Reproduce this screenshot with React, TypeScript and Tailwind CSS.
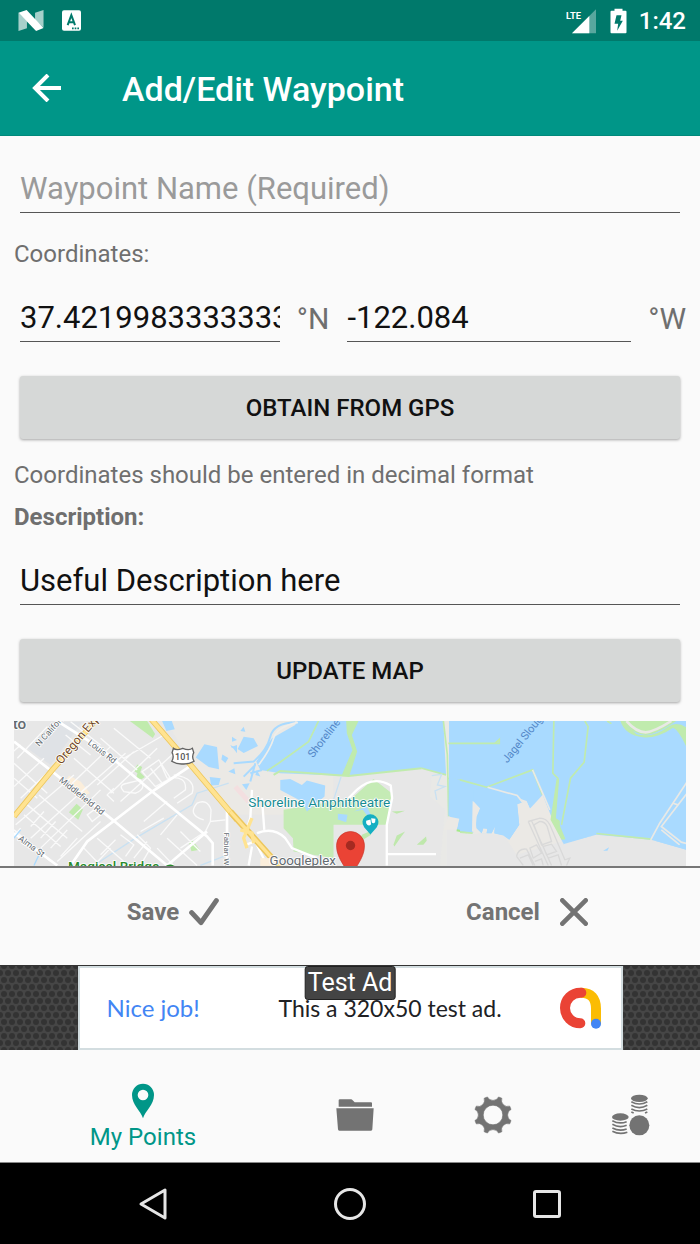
import type { ReactNode } from "react";

const fieldClass =
  "h-[46px] min-w-0 border-b border-[#555] bg-transparent pb-[2px] text-[31px] text-[#111] outline-none placeholder:text-[#9a9a9a]";
const raisedClass =
  "mx-[6px] h-[63px] rounded-[3px] bg-[#d6d8d7] text-2xl font-medium text-[#111] shadow-[0_1px_3px_rgba(0,0,0,0.35)]";

function StatusBar() {
  return (
    <div className="flex h-[41px] shrink-0 items-center bg-[#00796b] pr-[14px] pl-[18px] text-white">
      <svg className="h-[21px] w-[26px]" viewBox="0 0 76 62" aria-hidden="true">
        <path d="M1 8 26 33V54L1 62ZM75 0V52L50 30V8Z" fill="#fff" opacity=".65" />
        <path d="M1 8 25 0 75 53 53 62Z" fill="#fff" />
      </svg>
      <svg className="ml-[18px] h-[21px] w-[19px]" viewBox="0 0 57 62" aria-hidden="true">
        <rect width="57" height="62" rx="6" fill="#fff" />
        <path d="M17 45 28 15 39 45M20 36H36" fill="none" stroke="#00796b" strokeWidth="6" />
        <path d="M30 52h5v5h-5zM38 52h5v5h-5zM46 52h5v5h-5z" fill="#00796b" />
      </svg>
      <div className="flex-1" />
      <svg className="h-[26px] w-[32px]" viewBox="0 0 96 78" aria-label="LTE signal">
        <path d="M90 4V76H18Z" fill="#fff" opacity=".35" />
        <path d="M70 24V76H18Z" fill="#fff" />
        <text x="0" y="32" fontSize="28" fontWeight="700" fill="#fff" className="font-['Roboto',sans-serif]">
          LTE
        </text>
      </svg>
      <svg className="ml-[12px] h-[26px] w-[17px]" viewBox="0 0 50 78" aria-hidden="true">
        <path d="M13 2H37V8H46Q49 8 49 11V73Q49 76 46 76H4Q1 76 1 73V11Q1 8 4 8H13Z" fill="#fff" />
        <path d="M19 22H34L30 38H38L21 68L24 47H13Z" fill="#00796b" />
      </svg>
      <span className="ml-[12px] text-2xl font-medium">1:42</span>
    </div>
  );
}

function MapView() {
  return (
    <svg className="mt-[19px] block w-full shrink-0" viewBox="0 0 2019 900" role="img" aria-label="Map of the waypoint">
      <rect width="2019" height="900" fill="#e7e7e7" />
      <g transform="translate(-40 -18)">
        <path d="M498 18H1000V300L705 300 575 150Z" fill="#ebe9e5" />
        <path d="M80 100 160 20H245L150 150Z" fill="#dfe2e6" />
        <path d="M205 182 240 200 268 235 232 250 190 205Z" fill="#fbeedb" />
        <path d="M388 18H440L464 57 457 69Z" fill="#c0ebad" />
        <path d="M411 149 425 156 419 172 433 186 423 193 407 188 411 175 399 167ZM228 267 247 284 233 315 205 292ZM576 376 598 405 573 409 566 382Z" fill="#c0ebad" />
        <path d="M485 18H514L523 43 498 48ZM586 128 612 88 650 96 656 163 625 156ZM666 119 684 129 675 144 663 134ZM628 186 661 190 655 210 632 212ZM695 95 710 90V115ZM684 170 702 160 705 178Z" fill="#a9daff" />
        <path d="M685 205 590 235 575 270 405 370 280 452M600 452 670 425" fill="none" stroke="#c9e1f2" strokeWidth="4" />
        <g fill="none" stroke="#fafafa" strokeWidth="4">
          <path d="M40 145 140 235M40 190 110 250M60 90 10 135M140 35 50 130M40 215 130 130M60 250 180 135M45 330 220 180M90 370 260 215M120 400 300 225M170 440 300 320M220 130 340 235M215 205 330 95M245 230 375 115M290 210 400 110M330 235 470 100M360 260 520 115M300 70 410 165M340 40 450 130M370 130 490 60M195 60 270 120M210 20 300 90" />
          <path d="M80 270 200 370M70 300 180 395M115 240 245 350M40 345 150 440M60 340 25 380M130 290 90 335M165 320 120 370M200 345 150 400M230 370 180 425M250 400 300 452M290 370 370 440M330 400 280 452M345 375 300 420M360 360 400 390 375 425M410 360 450 400 420 452M440 380 400 430M470 400 520 452M500 370 590 452M540 350 600 410M490 310 420 350M530 300 480 360M500 260 430 320M380 205Q350 210 370 230L405 235Q440 220 420 195L380 205M425 170 475 135 510 190 465 215ZM450 160 485 205M480 145 500 190M500 190Q560 180 555 225L520 250M520 180Q590 190 575 235L530 265M610 315Q560 300 590 265Q620 250 632 285L630 320 675 315M630 320 615 350 540 400M260 300 280 285 300 300 275 320ZM340 220 320 240 340 260" />
        </g>
        <g fill="none" stroke="#fff" strokeWidth="8">
          <path d="M40 80 155 170 340 318 500 452M170 18 300 100 455 230 620 365 637 385V452M575 150 455 230 260 380 210 452M680 285V452M40 355 170 452M500 452 620 350" />
        </g>
        <path d="M40 305 155 165 285 18M450 10 575 155 710 315" fill="none" stroke="#edc75d" strokeWidth="17" />
        <path d="M40 305 155 165 285 18M450 10 575 155 710 315" fill="none" stroke="#ffe391" strokeWidth="12" />
        <path d="M40 370 60 345M100 452 115 420" stroke="#a9daff" strokeWidth="4" />
      </g>

      <g transform="translate(650 -18)">
        <path d="M200 18H705V345L655 302 650 182 575 160 355 183 150 175 90 165 78 140 125 70 195 30Z" fill="#a9daff" />
        <path d="M640 18H657V185L650 305 650 452H630L645 285 600 245 605 180 648 178Z" fill="#e9e9e6" />
        <path d="M110 168 145 145 235 80 265 18M575 160 648 180M640 18 652 120 656 305M655 85H705M656 190 705 200" fill="none" stroke="#c0ebad" strokeWidth="5" />
        <path d="M348 18 350 55 367 105 335 180 357 184 381 110 365 60 385 18Z" fill="#c0ebad" />
        <path d="M575 160 355 183 150 168 130 180" fill="none" stroke="#c0ebad" strokeWidth="6" />
        <path d="M657 185 705 200V350L680 345 688 312 655 302Z" fill="#a9daff" />
        <path d="M655 305 688 312 680 345 640 345Z" fill="#ebe9e5" />
        <path d="M680 346 710 352" stroke="#a5ea8a" strokeWidth="6" />
        <path d="M40 65 70 70 83 93 40 114 22 102ZM40 35 45 50 30 48ZM5 65 20 75 5 80ZM80 165 90 185 75 180ZM35 208 58 205 48 225ZM0 90 10 95 5 100Z" fill="#a9daff" />
        <path d="M195 22Q130 25 120 65T70 140L10 145M75 145 60 200M75 150 40 185M95 165 60 175" fill="none" stroke="#a9daff" strokeWidth="6" />
        <path d="M203 22Q140 35 130 70T85 150" fill="none" stroke="#eeeeeb" strokeWidth="5" />
        <path d="M160 285 365 250 430 192 485 235 470 330H310V430L190 410 188 370 160 340Z" fill="#c5ebb5" />
        <path d="M150 195 180 192 215 210 230 197 285 212 283 245 230 290 215 260 150 225ZM323 297 352 300 348 322 323 314ZM370 290 410 275 425 305 415 308 398 285Z" fill="#a9daff" />
        <path d="M310 255 333 185" stroke="#c9e1f2" strokeWidth="4" />
        <path d="M485 290 525 288 500 297ZM490 390 500 362 525 350 510 370 493 395ZM560 390 588 365 590 378 580 390ZM395 360 418 350 423 360 390 380Z" fill="#bfe8ac" />
        <path d="M605 182 635 178 622 210 645 215 615 228 620 255" fill="none" stroke="#c9e1f2" strokeWidth="4" />
        <path d="M355 250 380 225Q430 180 482 212L486 250 470 330V452M470 418H618M80 355Q130 335 165 370L185 400 260 430M65 225 60 310 40 370M95 250 102 345M45 390 75 380 110 452M65 395 55 452" fill="none" stroke="#fff" strokeWidth="7" />
        <path d="M15 215 55 260" stroke="#f3dfe0" strokeWidth="15" />
        <path d="M0 290 125 430 155 460" fill="none" stroke="#edc75d" strokeWidth="19" />
        <path d="M0 290 125 430 155 460M65 310 40 370 50 400M30 345 65 355 70 385" fill="none" stroke="#ffe391" strokeWidth="10" />
        <path d="M90 430H135V460H90Z" fill="#fbeedb" />
      </g>

      <g transform="translate(1340 -18)">
        <path d="M0 18H690V408L575 375 410 360 310 385 275 315 248 240 240 265 210 282 200 260 172 268 180 330 148 375 130 360 0 350Z" fill="#a9daff" />
        <path d="M80 217 170 240 188 262 172 268 178 330 148 375 130 362 60 355 40 358V258L60 280 47 310 50 340 65 355 70 340 82 342 80 355 95 355 105 335 103 355 135 365 170 420 305 380 248 240 210 282 200 258Z" fill="#ebe9e5" />
        <path d="M80 217 170 240 188 262 172 268 178 330 148 375 130 362 103 355 105 335 95 355 80 355 82 342 70 340 65 355 50 340 47 310 60 280 40 258V225Z" fill="#a9daff" />
        <path d="M38 258 60 280 50 305 46 352 36 350Z" fill="#ebe9e5" />
        <path d="M0 352 38 355M0 195 80 217 218 165 248 240M0 85H118V73L105 85M282 18 279 175 296 192M375 18 385 35 373 142 332 190 305 330M410 356 575 373M442 18 455 26" fill="none" stroke="#c0ebad" strokeWidth="5" />
        <path d="M290 192H298L288 310 300 318V332L317 373 305 375 272 315Z" fill="#c0ebad" />
        <path d="M83 217 172 242 190 265M218 165 270 285" fill="none" stroke="#e9e9e6" strokeWidth="5" />
        <path d="M482 18Q495 60 550 67Q595 70 640 38Q660 45 690 118V18Z" fill="#c0ebad" />
        <path d="M492 18Q520 65 580 55Q610 45 650 18H690V45Q655 15 625 35Q580 70 530 58Z" fill="#a9daff" />
        <path d="M500 18Q530 50 558 51Q585 50 625 18" fill="none" stroke="#c0ebad" strokeWidth="18" />
        <path d="M500 18Q530 52 558 52Q585 50 635 18" fill="none" stroke="#e9e9e6" strokeWidth="8" />
        <path d="M683 200 600 325 573 375M690 225 605 335 665 382 690 388M605 345 660 390M640 265 655 270" fill="none" stroke="#e9e9e6" strokeWidth="5" />
        <path d="M315 378 400 362 310 388ZM575 375 690 397V407ZM430 408 448 397 443 408ZM498 425 510 437Z" fill="#a9daff" />
        <g fill="none" stroke="#d9d9d9" strokeWidth="4">
          <path d="M205 320 240 310Q260 310 270 330L315 435 330 430 320 452M205 320 265 452M215 318 275 452M222 330 240 320Q255 320 262 335L275 380 245 390ZM170 425Q175 400 200 403L225 452M170 425 190 452M210 400 230 390 245 415 220 430ZM250 395 275 388 290 410 260 420ZM180 430 205 420 220 452M225 440 245 432 250 452M265 430 295 420 305 452" />
        </g>
      </g>

      <g className="font-['Roboto',sans-serif]" fill="#636a70" stroke="#fff" strokeWidth="5" paintOrder="stroke" strokeLinejoin="round">
        <text x="-4" y="23" fontSize="46" fontWeight="500">to</text>
        <text transform="translate(76 78) rotate(-48)" fontSize="26">N California Ave</text>
        <text transform="translate(142 132) rotate(-50)" fontSize="36" fill="#71471f">Oregon Expy</text>
        <text transform="translate(220 68) rotate(38)" fontSize="26">Louis Rd</text>
        <text transform="translate(134 180) rotate(39)" fontSize="26">Middlefield Rd</text>
        <text transform="translate(11 357) rotate(36)" fontSize="26">Alma St</text>
        <text transform="translate(631 335) rotate(90)" fontSize="24">Fabian Way</text>
        <text x="162" y="450" fontSize="41" fontWeight="500" fill="#278a2c">Magical Bridge</text>
        <circle cx="469" cy="453" r="22" fill="#278a2c" stroke="none" />
        <text x="704" y="258" fontSize="41" fill="#168b92">Shoreline Amphitheatre</text>
        <text x="768" y="434" fontSize="40">Googleplex</text>
        <text transform="translate(898 112) rotate(-52)" fontSize="33" fill="#5387c8" stroke="none">Shoreline Lake</text>
        <text transform="translate(1482 128) rotate(-51)" fontSize="33" fill="#5387c8" stroke="none">Jagel Slough</text>
      </g>
      <g>
        <path d="M479 82Q488 90 507 82Q526 90 536 82L540 95Q533 108 541 121Q525 130 507 129Q489 130 474 121Q482 108 475 95Z" fill="#fff" stroke="#626262" strokeWidth="4" />
        <text x="507" y="117" textAnchor="middle" fontSize="27" fontWeight="500" fill="#555" className="font-['Roboto',sans-serif]">101</text>
        <path d="M1071 341 1052 319A24 24 0 1 1 1090 319Z" fill="#14afc2" />
        <path d="M1058 300 1071 296 1073 310Q1065 319 1058 307ZM1073 292 1086 294 1085 304Q1080 310 1075 305Z" fill="#fff" />
        <path d="M986 418Q990 405 1000 405V438Q986 432 986 418Z" fill="#69747c" />
        <path d="M1011 484C1005 440 969 419 969 374A42 42 0 0 1 1053 374C1053 419 1017 440 1011 484Z" fill="#ea4335" stroke="#c8362b" strokeWidth="2" />
        <circle cx="1011" cy="374" r="14" fill="#a42a21" />
      </g>
    </svg>
  );
}

function AdTexture({ id }: { id: string }) {
  return (
    <svg className="h-full min-w-0 flex-1" aria-hidden="true">
      <defs>
        <pattern id={id} width="8" height="14" patternUnits="userSpaceOnUse">
          <rect width="8" height="14" fill="#464646" />
          <circle cx="4" cy="0" r="3" fill="#333" />
          <circle cx="4" cy="14" r="3" fill="#333" />
          <circle cx="0" cy="7" r="3" fill="#333" />
          <circle cx="8" cy="7" r="3" fill="#333" />
        </pattern>
      </defs>
      <rect width="100%" height="100%" fill={`url(#${id})`} />
    </svg>
  );
}

function AdBanner() {
  return (
    <aside className="flex h-[85px] shrink-0 border-t border-[#333] bg-[#333]">
      <AdTexture id="weave-left" />
      <div className="relative flex w-[545px] items-center border-2 border-[#d3dde0] bg-white pr-[19px] pl-[27px] font-['Lato',sans-serif] text-[23px] text-[#202124]">
        <span className="w-[172px] text-2xl text-[#4285f4]">Nice job!</span>
        <span>This a 320x50 test ad.</span>
        <svg className="ml-auto h-[42px] w-[42px]" viewBox="0 0 126 126" fill="none" strokeLinecap="round" aria-hidden="true">
          <path d="M64 17Q108 18 108 65V106" stroke="#fbbc04" strokeWidth="30" />
          <path d="M64 17H61A46 46 0 0 0 61 109" stroke="#ea4335" strokeWidth="30" />
          <circle cx="108" cy="110" r="15" fill="#4285f4" />
        </svg>
        <span className="absolute -top-[2px] left-1/2 -translate-x-1/2 rounded-[3px] border border-[#222] bg-[#444] px-[2px] font-['Roboto',sans-serif] text-[25px] leading-[32px] whitespace-nowrap text-white">
          Test Ad
        </span>
      </div>
      <AdTexture id="weave-right" />
    </aside>
  );
}

function Tab({ label, children }: { label: string; children: ReactNode }) {
  return (
    <button aria-label={label} className="flex w-[138px] items-center justify-center pt-[18px] text-[#737373]">
      {children}
    </button>
  );
}

function BottomTabs() {
  return (
    <nav className="flex h-[112px] shrink-0">
      <button className="flex flex-1 flex-col items-center pt-[33px] text-2xl leading-[28px] text-[#009688]">
        <svg className="mb-[4px] h-[36px] w-[22px]" viewBox="0 0 66 106" aria-hidden="true">
          <path fillRule="evenodd" d="M33 105C26 82 0 65 0 35A33 34 0 0 1 66 35C66 65 40 82 33 105ZM33 19A16 16 0 1 0 33 51A16 16 0 1 0 33 19Z" fill="currentColor" />
        </svg>
        My Points
      </button>
      <Tab label="Folders">
        <svg className="h-[32px] w-[38px]" viewBox="0 0 114 96" fill="currentColor" aria-hidden="true">
          <path d="M8 23V4Q8 1 12 1H45Q48 1 50 4L56 10H105Q108 10 108 13V23ZM1 28H113L109 91Q109 95 105 95H10Q6 95 6 91Z" />
        </svg>
      </Tab>
      <Tab label="Settings">
        <svg className="h-[38px] w-[38px]" viewBox="-58 -58 116 116" fill="currentColor" aria-hidden="true">
          <path
            fillRule="evenodd"
            strokeLinejoin="round"
            stroke="currentColor"
            strokeWidth="2"
            d="M-17-55A19 19 0 0 0 17-55L27-51A19 19 0 0 0 51-27L55-17A19 19 0 0 0 55 17L51 27A19 19 0 0 0 27 51L17 55A19 19 0 0 0-17 55L-27 51A19 19 0 0 0-51 27L-55 17A19 19 0 0 0-55-17L-51-27A19 19 0 0 0-27-51ZM0-30A30 30 0 1 0 0 30A30 30 0 1 0 0-30Z"
          />
        </svg>
      </Tab>
      <Tab label="Donate">
        <svg className="h-[42px] w-[38px]" viewBox="0 0 114 126" fill="none" stroke="currentColor" strokeWidth="5" aria-hidden="true">
          <ellipse cx="82" cy="13" rx="25" ry="11" fill="currentColor" stroke="none" />
          <ellipse cx="25" cy="69" rx="25" ry="11" fill="currentColor" stroke="none" />
          <path d="M58 23Q82 37 106 23M58 34Q82 48 106 34M58 45Q82 57 106 45M58 54 65 57M106 54 99 57M1 80Q22 92 44 83M1 91Q22 103 44 94M1 102Q22 113 44 105M1 112Q22 123 46 115" />
          <circle cx="82" cy="94" r="30" fill="currentColor" stroke="none" />
        </svg>
      </Tab>
    </nav>
  );
}

function SystemNav() {
  return (
    <div className="flex h-[82px] shrink-0 justify-center border-t border-[#888] bg-black text-[#e6e6e6]">
      <button aria-label="Back" className="flex w-[197px] items-center justify-center">
        <svg className="h-[34px] w-[34px]" viewBox="0 0 34 34" fill="none" stroke="currentColor" strokeWidth="3" strokeLinejoin="round" aria-hidden="true">
          <path d="M5 17 29 3V31Z" />
        </svg>
      </button>
      <button aria-label="Home" className="flex w-[197px] items-center justify-center">
        <svg className="h-[34px] w-[34px]" viewBox="0 0 34 34" fill="none" stroke="currentColor" strokeWidth="3" aria-hidden="true">
          <circle cx="17" cy="17" r="14.5" />
        </svg>
      </button>
      <button aria-label="Recent apps" className="flex w-[197px] items-center justify-center">
        <svg className="h-[34px] w-[34px]" viewBox="0 0 34 34" fill="none" stroke="currentColor" strokeWidth="3" aria-hidden="true">
          <rect x="4.5" y="4.5" width="25" height="25" rx="1.5" />
        </svg>
      </button>
    </div>
  );
}

export default function App() {
  return (
    <div className="flex h-screen flex-col overflow-hidden bg-[#fafafa] font-['Roboto',sans-serif]">
      <StatusBar />
      <header className="flex h-[95px] shrink-0 items-center border-b border-[#00897b] bg-[#009688] pl-[32px] text-white">
        <button aria-label="Back">
          <svg className="block h-[28px] w-[30px]" viewBox="0 0 30 28" fill="none" stroke="currentColor" strokeWidth="4" aria-hidden="true">
            <path d="M29 14H4M16 1 3 14 16 27" />
          </svg>
        </button>
        <h1 className="ml-[60px] pt-[3px] text-[34px] font-medium">Add/Edit Waypoint</h1>
      </header>

      <main className="flex min-h-0 flex-1 flex-col overflow-hidden px-[14px] pt-[31px] text-2xl leading-[28px] text-[#6f6f6f]">
        <input aria-label="Waypoint name" placeholder="Waypoint Name (Required)" className={`${fieldClass} mx-[6px] shrink-0`} />
        <p className="mt-[27px]">Coordinates:</p>
        <div className="mt-[28px] flex items-center pl-[6px] text-[30px]">
          <input aria-label="Latitude" defaultValue="37.421998333333335" className={`${fieldClass} flex-[260_1_0%]`} />
          <span className="pr-[18px] pl-[17px]">°N</span>
          <input aria-label="Longitude" defaultValue="-122.084" className={`${fieldClass} flex-[284_1_0%]`} />
          <span className="pl-[17px]">°W</span>
        </div>
        <button className={`${raisedClass} mt-[34px] shrink-0`}>OBTAIN FROM GPS</button>
        <p className="mt-[22px]">Coordinates should be entered in decimal format</p>
        <label htmlFor="description" className="mt-[14px] font-bold">
          Description:
        </label>
        <input id="description" defaultValue="Useful Description here" className={`${fieldClass} mx-[6px] mt-[28px] shrink-0`} />
        <button className={`${raisedClass} mt-[34px] shrink-0`}>UPDATE MAP</button>
        <MapView />
      </main>

      <div className="flex h-[99px] shrink-0 border-t-2 border-[#777] pb-[9px] text-2xl font-bold text-[#737373]">
        <button className="flex flex-1 items-center justify-center gap-[10px] pr-[8px]">
          Save
          <svg className="h-[30px] w-[30px]" viewBox="0 0 90 84" fill="none" stroke="currentColor" strokeWidth="15" strokeLinecap="round" strokeLinejoin="round" aria-hidden="true">
            <path d="M8 44 36 74 82 8" />
          </svg>
        </button>
        <button className="flex flex-1 items-center justify-center gap-[20px]">
          Cancel
          <svg className="h-[28px] w-[28px]" viewBox="0 0 84 84" fill="none" stroke="currentColor" strokeWidth="14" strokeLinecap="round" aria-hidden="true">
            <path d="M7 7 77 77M77 7 7 77" />
          </svg>
        </button>
      </div>

      <AdBanner />
      <BottomTabs />
      <SystemNav />
    </div>
  );
}
